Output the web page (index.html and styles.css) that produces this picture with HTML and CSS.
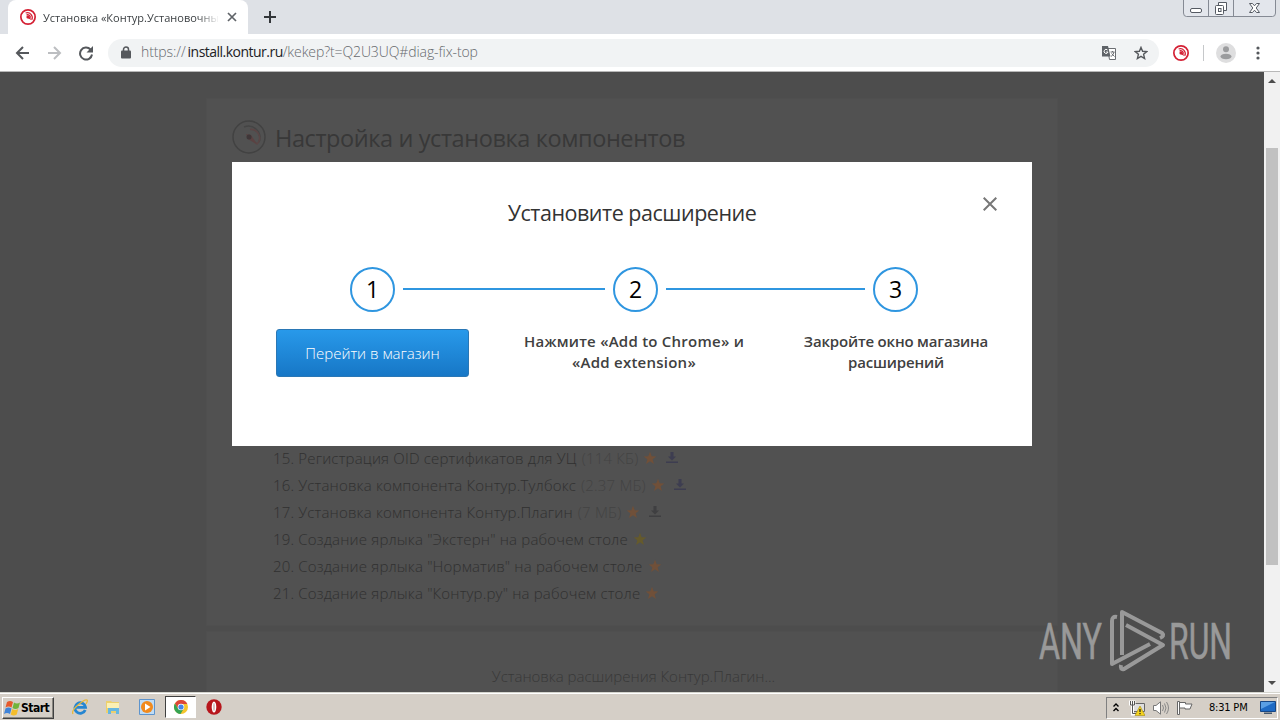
FILE: index.html
```html
<!DOCTYPE html>
<html lang="ru">
<head>
    <meta charset="UTF-8">
    <title>Установка «Контур.Установочный диск»</title>
    <link rel="stylesheet" href="styles.css">
</head>
<body>
    <!-- Shared icons -->
    <svg class="sprite" width="0" height="0">
        <symbol id="kontur" viewBox="0 0 34 34">
            <circle cx="17" cy="17" r="15.200" fill="none" stroke="currentColor" stroke-width="3.600"/>
            <path d="M12 8.500a10.500 10.500 0 0 1 13 14.500M14 12.500a6 6 0 0 1 8 6" fill="none" stroke="currentColor" stroke-width="2.600"/>
            <path d="M14 14l5 1 6 9-9-5z" fill="currentColor"/>
            <circle cx="17" cy="17" r="3.400" fill="currentColor"/>
        </symbol>
        <symbol id="star" viewBox="0 0 14 14">
            <path d="M7 .8l1.700 4.400 4.600.2-3.600 2.900 1.200 4.600L7 10.300l-3.900 2.600 1.200-4.600L.7 5.400l4.600-.2z" fill="currentColor"/>
        </symbol>
        <symbol id="download" viewBox="0 0 12 12">
            <path d="M4.500 0h3v4.500H10L6 8.500 2 4.500h2.500zM0 9.500h12V11H0z" fill="currentColor"/>
        </symbol>
    </svg>

    <div class="tabstrip">
        <div class="tab">
            <svg class="favicon" width="16" height="16"><use href="#kontur"/></svg>
            <span class="tab-title">Установка «Контур.Установочный</span>
            <svg class="tab-close" width="10" height="10" viewBox="0 0 10 10"><path d="M1 1l8 8M9 1L1 9" stroke="#5f6368" stroke-width="1.700"/></svg>
        </div>
        <svg class="new-tab" width="12" height="12" viewBox="0 0 12 12"><path d="M6 0v12M0 6h12" stroke="#33363a" stroke-width="2"/></svg>
        <svg class="window-buttons" width="94" height="17" viewBox="0 0 94 17">
            <path d="M.5 0v13q0 3.500 3 3.500h86q3 0 3-3.500V0M25.500 0v16M50.500 0v16" fill="#e3e6ec" stroke="#858a94"/>
            <rect x="7.500" y="8.500" width="11" height="4" rx="1.500" fill="#fff" stroke="#555a63"/>
            <path d="M35.500 5V2.500h8v8H41" fill="#fff" stroke="#555a63"/>
            <rect x="32.500" y="5.500" width="8" height="9" rx="1" fill="#fff" stroke="#555a63"/>
            <rect x="35.500" y="8.500" width="2.500" height="3" fill="#fff" stroke="#555a63"/>
            <path d="M66.500 3.500h3l2 2.300 2-2.300h3L73.200 8l3.300 4.500h-3l-2-2.300-2 2.300h-3L69.800 8z" fill="#fff" stroke="#555a63"/>
        </svg>
    </div>

    <div class="toolbar">
        <svg class="nav" width="80" height="16" viewBox="0 0 80 16" fill="none" stroke-width="2">
            <path d="M14 8H2M8 2L2 8l6 6" stroke="#55585c"/>
            <path d="M33 8h12M39 2l6 6-6 6" stroke="#bcbec1"/>
            <path d="M75.500 4.500A6 6 0 1 0 77 9.500" stroke="#55585c"/>
            <path d="M78 1v6.500h-6.500z" fill="#55585c"/>
        </svg>
        <div class="omnibox">
            <svg class="lock" width="10" height="13" viewBox="0 0 10 13"><rect y="4.500" width="10" height="8" rx="1" fill="#55585c"/><path d="M2.500 5V3.500a2.500 2.500 0 0 1 5 0V5" fill="none" stroke="#55585c" stroke-width="1.500"/></svg>
            <span class="url">https://<b>install.kontur.ru</b>/kekep?t=Q2U3UQ#diag-fix-top</span>
            <svg class="translate" width="14" height="14" viewBox="0 0 14 14">
                <path d="M5.500 2.500h8v11h-6z" fill="#fff" stroke="#6b6e72"/>
                <path d="M0 0h6l2.500 10.500H0z" fill="#5f6368"/>
                <path d="M5.500 4A2 2 0 1 0 6 6H4.200" fill="none" stroke="#fff"/>
                <path d="M8.500 6h4M10.500 5v1M12 6q-.5 3-3 4.500M9.500 7.500l3 3" fill="none" stroke="#6b6e72"/>
            </svg>
            <svg class="bookmark" width="14" height="14" viewBox="0 0 14 14"><path d="M7 1.400l1.600 3.900 4.200.3-3.200 2.700 1 4.200L7 10.300l-3.600 2.200 1-4.200-3.200-2.700 4.200-.3z" fill="none" stroke="#55585c" stroke-width="1.400"/></svg>
        </div>
        <svg class="extension" width="16" height="16"><use href="#kontur"/></svg>
        <span class="separator"></span>
        <svg class="avatar" width="20" height="20" viewBox="0 0 20 20"><circle cx="10" cy="10" r="10" fill="#dededf"/><circle cx="10" cy="6.300" r="3" fill="#9b9c9e"/><ellipse cx="10" cy="13.500" rx="5.500" ry="2.800" fill="#9b9c9e"/></svg>
        <svg class="dots" width="4" height="14" viewBox="0 0 4 14" fill="#55585c"><circle cx="2" cy="2" r="1.600"/><circle cx="2" cy="7" r="1.600"/><circle cx="2" cy="12" r="1.600"/></svg>
    </div>

    <div class="viewport">
        <div class="page">
            <div class="card">
                <div class="card-head">
                    <svg class="logo" width="34" height="34" viewBox="0 0 34 34">
                        <circle cx="17" cy="17" r="16" fill="none" stroke="#424242" stroke-width="1.500"/>
                        <path d="M12 7a11.500 11.500 0 0 1 15 15" fill="none" stroke="#454545" stroke-width="1.500"/>
                        <path d="M18 9.500a8.500 8.500 0 0 1 7 14.500l-8-6" fill="none" stroke="#5a4646" stroke-width="1.600"/>
                        <path d="M14 14l5 1 6 9-9-5z" fill="#5b4242"/>
                        <circle cx="17" cy="17" r="2.500" fill="#3f3638"/>
                    </svg>
                    <h1>Настройка и установка компонентов</h1>
                </div>
                <ul class="components">
                    <li><span>15. Регистрация OID сертификатов для УЦ</span><i>(114 КБ)</i><svg class="star" width="14" height="14"><use href="#star"/></svg><svg class="download" width="12" height="12"><use href="#download"/></svg></li>
                    <li><span>16. Установка компонента Контур.Тулбокс</span><i>(2.37 МБ)</i><svg class="star" width="14" height="14"><use href="#star"/></svg><svg class="download" width="12" height="12"><use href="#download"/></svg></li>
                    <li><span>17. Установка компонента Контур.Плагин</span><i>(7 МБ)</i><svg class="star" width="14" height="14"><use href="#star"/></svg><svg class="download grey" width="12" height="12"><use href="#download"/></svg></li>
                    <li><span>19. Создание ярлыка "Экстерн" на рабочем столе</span><svg class="star green" width="14" height="14"><use href="#star"/></svg></li>
                    <li><span>20. Создание ярлыка "Норматив" на рабочем столе</span><svg class="star" width="14" height="14"><use href="#star"/></svg></li>
                    <li><span>21. Создание ярлыка "Контур.ру" на рабочем столе</span><svg class="star" width="14" height="14"><use href="#star"/></svg></li>
                </ul>
            </div>
            <div class="card status"><span>Установка расширения Контур.Плагин...</span></div>
        </div>
        <div class="scrollbar">
            <svg width="8" height="4" viewBox="0 0 8 4"><path d="M0 4l4-4 4 4z" fill="#4d4d4d"/></svg>
            <div class="thumb"></div>
            <svg width="8" height="4" viewBox="0 0 8 4"><path d="M0 0l4 4 4-4z" fill="#4d4d4d"/></svg>
        </div>

        <div class="modal">
            <svg class="modal-close" width="14" height="14" viewBox="0 0 14 14"><path d="M.7.7l12.600 12.600M13.300.7L.7 13.300" stroke="#777" stroke-width="2"/></svg>
            <h2>Установите расширение</h2>
            <div class="steps">
                <span class="circle">1</span>
                <span class="line"></span>
                <span class="circle">2</span>
                <span class="line second"></span>
                <span class="circle">3</span>
            </div>
            <div class="captions">
                <a class="button">Перейти в магазин</a>
                <p class="add">Нажмите «Add to Chrome» и<br>«Add extension»</p>
                <p class="close">Закройте окно магазина<br>расширений</p>
            </div>
        </div>

        <svg class="watermark" width="200" height="74" viewBox="0 0 200 74">
            <g class="watermark-text">
                <text x="2" y="51" textLength="63" lengthAdjust="spacingAndGlyphs">ANY</text>
                <text x="132" y="51" textLength="63" lengthAdjust="spacingAndGlyphs">RUN</text>
            </g>
            <g fill="none" stroke="#999" stroke-width="4" stroke-linejoin="round">
                <path d="M80 9q-5-1-5 4v43l38-20"/>
                <path d="M85 47V4l40 21q3 3-2 5"/>
                <path d="M89 17l37 20-39 24q-4 1-3-4"/>
            </g>
        </svg>
    </div>

    <div class="taskbar">
        <div class="start">
            <svg width="17" height="16" viewBox="0 0 17 16">
                <path d="M3 2q3-2 6 0L7.500 7.500q-3-2-6 0z" fill="#e65a2c"/>
                <path d="M10 2.500q3 2 6 0L14.500 8q-3 2-6 0z" fill="#71b43c"/>
                <path d="M1.500 8.500q3-2 6 0L6 14q-3-2-6 0z" fill="#3f83d8"/>
                <path d="M8.200 9q3 2 6 0l-1.500 5.500q-3 2-6 0z" fill="#f5bd2b"/>
            </svg>
            <span>Start</span>
        </div>
        <svg class="ie" width="16" height="16" viewBox="0 0 16 16">
            <path d="M13.200 11A5.300 5.300 0 1 1 13.500 8.300H4" fill="none" stroke="#2686d1" stroke-width="2.800"/>
            <path d="M1 15Q-1 12 6 6T15 1q1 1-1 4" fill="none" stroke="#e9b93a" stroke-width="1.300"/>
        </svg>
        <svg class="folder" width="16" height="16" viewBox="0 0 16 16">
            <path d="M1 2h5l1 1h7v11H1z" fill="#ecd06d"/><path d="M2 4h12v5H2z" fill="#fbf0b4"/>
            <path d="M3 15V9h11v6h-3v-3H6v3z" fill="#67b7e0"/>
        </svg>
        <svg class="player" width="16" height="16" viewBox="0 0 16 16">
            <path d="M.5.500h15v15H.5z" fill="#bfdcf5" stroke="#5d94cd"/><circle cx="8" cy="8" r="6" fill="#f18a1d"/><path d="M6 4.500l5.500 3.500L6 11.500z" fill="#fff"/>
        </svg>
        <div class="task-active">
            <svg width="14" height="14" viewBox="0 0 14 14">
                <circle cx="7" cy="7" r="7" fill="#f5c52c"/>
                <path d="M1 3.500A7 7 0 0 1 13.300 4H7L4 8.500z" fill="#dd4638"/>
                <path d="M.9 3.500A7 7 0 0 0 6.500 14L9.500 9 4 8.500z" fill="#35a353"/>
                <circle cx="7" cy="7" r="3.300" fill="#fff"/><circle cx="7" cy="7" r="2.600" fill="#4585e8"/>
            </svg>
        </div>
        <svg class="opera" width="16" height="16" viewBox="0 0 16 16"><circle cx="8" cy="8" r="7.700" fill="#b7161c"/><ellipse cx="8" cy="8" rx="2.300" ry="5.500" fill="#fff"/><ellipse cx="8" cy="8" rx=".7" ry="4" fill="#c9a5a6"/></svg>
        <div class="tray">
            <svg class="chevrons" width="6" height="9" viewBox="0 0 6 9"><path d="M.5 3.500L3 1l2.500 2.500M.5 8L3 5.500 5.500 8" fill="none" stroke="#000" stroke-width="1.400"/></svg>
            <svg class="network" width="16" height="16" viewBox="0 0 16 16">
                <path d="M4.500 3.500h11v8h-11z" fill="#dedede" stroke="#666"/>
                <path d="M0 .5h6.500v5H5v8h4v2H2v-10H0z" fill="#fff"/>
                <path d="M1.500 1v4h4V1M3.500 1v12.500H8" fill="none" stroke="#555"/>
                <path d="M11 6l5 9.500H6z" fill="#f5d31d" stroke="#a58b10" stroke-width=".6"/><path d="M11 9v3M11 13v1.300" stroke="#222" stroke-width="1.300"/>
            </svg>
            <svg class="sound" width="16" height="14" viewBox="0 0 16 14"><path d="M.5 4.500H3L7.500.8v12.400L3 9.500H.5z" fill="#fff" stroke="#777"/><path d="M9.500 4q2 3 0 6M11.500 2.500q3 4.500 0 9M13.500 1q4 6 0 12" fill="none" stroke="#888"/></svg>
            <svg class="flag" width="16" height="14" viewBox="0 0 16 14"><path d="M.5.500h2v13h-2zM2.500 1.500h6v1.500h6.500l-2 5H8V7H2.500z" fill="#fff" stroke="#666"/></svg>
            <span class="clock">8:31 PM</span>
            <svg class="desktop" width="16" height="13" viewBox="0 0 16 13"><path d="M.5.500h15v10H.5z" fill="#1f6bc4" stroke="#174785"/><path d="M1 1h14L1 8z" fill="#5a9fe4"/><path d="M4 11.500h8v1.500H4z" fill="#46586d"/></svg>
        </div>
    </div>
</body>
</html>
```
FILE: styles.css
```css
* {
    box-sizing: border-box;
}

body {
    margin: 0;
    width: 1280px;
    height: 720px;
    overflow: hidden;
    display: flex;
    flex-direction: column;
    font-family: "Open Sans", "Noto Sans", sans-serif;
}

svg {
    display: block;
    flex: none;
}

span, i, h1, h2, p, a {
    white-space: nowrap;
}

.sprite {
    position: absolute;
}

/* Browser chrome */
.tabstrip {
    height: 34px;
    flex: none;
    background: #dee1e6;
    display: flex;
    align-items: flex-start;
    padding-left: 8px;
}

.tab {
    width: 240px;
    height: 34px;
    background: #fff;
    border-radius: 8px 8px 0 0;
    display: flex;
    align-items: center;
    padding-left: 12px;
}

.favicon, .extension {
    color: #d42034;
}

.tab-title {
    width: 176px;
    margin-left: 7px;
    overflow: hidden;
    font-size: 11px;
    color: #3c4043;
    -webkit-mask-image: linear-gradient(to right, #000 155px, transparent);
    mask-image: linear-gradient(to right, #000 155px, transparent);
}

.tab-close {
    margin-left: 8px;
}

.new-tab {
    margin: 11px 0 0 16px;
}

.window-buttons {
    margin-left: auto;
    margin-right: 3px;
}

.toolbar {
    height: 38px;
    flex: none;
    display: flex;
    align-items: center;
    background: #fff;
    border-bottom: 1px solid #b8b8b8;
}

.nav {
    margin-left: 15px;
}

.omnibox {
    width: 1051px;
    height: 28px;
    margin-left: 13px;
    border-radius: 14px;
    background: #f1f3f4;
    display: flex;
    align-items: center;
    padding-left: 13px;
}

.url {
    width: 961px;
    margin-left: 10px;
    padding-bottom: 2px;
    font-size: 14px;
    font-weight: 300;
    letter-spacing: -0.1px;
    color: #66696d;
}

.url b {
    font-weight: 400;
    letter-spacing: -0.52px;
    color: #202124;
}

.url b::before {
    content: "";
    padding-left: 2px;
}

.bookmark {
    margin-left: 18px;
}

.extension {
    margin-left: 14px;
}

.separator {
    width: 1px;
    height: 16px;
    margin-left: 14px;
    background: #c6c8ca;
}

.avatar {
    margin-left: 12px;
}

.dots {
    margin-left: 20px;
}

/* Dimmed page */
.viewport {
    position: relative;
    height: 620px;
    flex: none;
    display: flex;
    overflow: hidden;
    background: #4d4d4d;
}

.page {
    width: 1264px;
    height: 620px;
    padding: 26px 206px 0;
    overflow: hidden;
}

.card {
    height: 528px;
    background: #515151;
    border: 1px solid #4f4f4f;
}

.card-head {
    display: flex;
    padding: 21px 0 0 25px;
}

.logo {
    margin-right: 9px;
}

h1 {
    margin: 1px 0 0;
    font-size: 23.5px;
    line-height: 34px;
    font-weight: 400;
    letter-spacing: -0.4px;
    color: #383838;
}

.components {
    list-style: none;
    margin: 289px 0 0;
    padding: 0 0 0 66px;
}

.components li {
    height: 27px;
    display: flex;
    align-items: center;
    font-size: 15px;
    font-weight: 300;
    letter-spacing: 0.18px;
    color: #303030;
}

.components i {
    margin-left: 5px;
    font-style: normal;
    color: #434343;
}

.star {
    margin-left: 5px;
    color: #705039;
}

.star.green {
    color: #655a2c;
}

.download {
    margin-left: 9px;
    color: #3d3d50;
}

.download.grey {
    color: #3f3f41;
}

.status {
    height: 80px;
    margin-top: 5px;
    padding: 33px 0 0 3px;
    text-align: center;
    font-size: 15px;
    line-height: 22px;
    font-weight: 300;
    color: #383838;
}

.scrollbar {
    width: 16px;
    background: #f1f1f1;
    display: flex;
    flex-direction: column;
    align-items: center;
    padding: 7px 0;
}

.thumb {
    width: 12px;
    height: 417px;
    margin: 65px 0 auto;
    background: #c1c1c1;
}

/* Extension dialog */
.modal {
    position: absolute;
    left: 232px;
    top: 90px;
    width: 800px;
    height: 284px;
    background: #fff;
}

.modal-close {
    position: absolute;
    right: 35px;
    top: 35px;
}

h2 {
    margin: 36px 0 0;
    text-align: center;
    font-size: 21.5px;
    line-height: 30px;
    font-weight: 400;
    letter-spacing: -0.48px;
    color: #333;
}

.steps {
    display: flex;
    align-items: center;
    margin-top: 39px;
    padding-left: 118px;
}

.circle {
    width: 45px;
    height: 45px;
    border: 2px solid #2f96e0;
    border-radius: 50%;
    text-align: center;
    font-size: 23px;
    line-height: 41px;
    color: #000;
}

.line {
    width: 202px;
    height: 2px;
    margin: 0 8px 2px;
    background: #2f96e0;
}

.line.second {
    width: 199px;
}

.captions {
    display: flex;
    margin-top: 17px;
    padding-left: 44px;
}

.button {
    width: 193px;
    height: 48px;
    border: 1px solid #2a77b5;
    border-radius: 3px;
    background: linear-gradient(#2899ea, #1777c6);
    color: #fff;
    text-align: center;
    font-size: 15px;
    line-height: 47px;
    font-weight: 300;
}

.captions p {
    margin: 2px 0 0;
    text-align: center;
    font-size: 15px;
    line-height: 21px;
    font-weight: 600;
    color: #404040;
}

.captions .add {
    width: 260px;
    margin-left: 35px;
    letter-spacing: 0.24px;
}

.captions .close {
    width: 220px;
    margin-left: 22px;
    letter-spacing: -0.18px;
}

.watermark {
    position: absolute;
    left: 1037px;
    top: 536px;
}

.watermark-text {
    font-family: "Roboto", sans-serif;
    font-size: 50px;
    fill: #999;
    stroke: #999;
    stroke-width: 0.6px;
}

/* Windows taskbar */
.taskbar {
    height: 28px;
    flex: none;
    display: flex;
    align-items: center;
    background: #d5cfc7;
    border-top: 1px solid #d5d5ce;
    box-shadow: inset 0 1px #fff;
}

.start {
    width: 52px;
    height: 22px;
    margin: 2px 0 0 2px;
    display: flex;
    align-items: center;
    padding-left: 1px;
    border: 1px solid;
    border-color: #fff #404040 #404040 #fff;
    box-shadow: inset -1px -1px #8a8780;
    font-family: "DejaVu Sans Condensed", "DejaVu Sans", sans-serif;
    font-size: 12px;
    font-weight: 700;
    letter-spacing: -0.5px;
}

.ie {
    margin-left: 18px;
}

.folder {
    margin-left: 17px;
}

.player {
    margin-left: 18px;
}

.task-active {
    width: 31px;
    height: 22px;
    margin: 1px 0 0 10px;
    display: flex;
    align-items: center;
    justify-content: center;
    background: #fff;
    border: 1px solid;
    border-color: #404040 #fff #fff #404040;
}

.opera {
    margin-left: 10px;
}

.tray {
    width: 172px;
    height: 22px;
    margin: 2px 2px 0 auto;
    display: flex;
    align-items: center;
    padding-left: 6px;
    border: 1px solid;
    border-color: #808080 #fff #fff #808080;
}

.network {
    margin-left: 10px;
}

.sound, .flag {
    margin-left: 8px;
}

.clock {
    width: 41px;
    margin-left: 16px;
    font-family: "DejaVu Sans Condensed", "DejaVu Sans", sans-serif;
    font-size: 11px;
    letter-spacing: -0.2px;
}

.desktop {
    margin-left: 10px;
}
```
